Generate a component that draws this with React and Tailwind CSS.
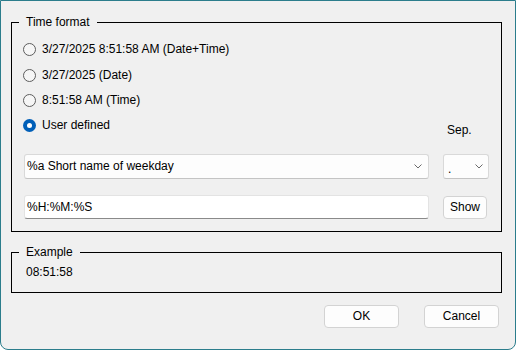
import React from "react";

function Radio({ checked, label }) {
  return (
    <div className="h-[25px] flex items-center pl-[11px]">
      {checked ? (
        <span className="w-[13px] h-[13px] rounded-full bg-[#005fb8] flex items-center justify-center">
          <span className="w-[5px] h-[5px] rounded-full bg-white" />
        </span>
      ) : (
        <span className="w-[13px] h-[13px] rounded-full border border-[#5d5d5d] bg-[#f6f6f6]" />
      )}
      <span className="ml-[6px]">{label}</span>
    </div>
  );
}

function Chevron() {
  return (
    <svg width="8" height="5" viewBox="0 0 8 5" className="block">
      <path d="M0.5 0.5 L4 4 L7.5 0.5" fill="none" stroke="#6a6a6a" strokeWidth="1" />
    </svg>
  );
}

export default function App() {
  return (
    <div className="w-[516px] h-[350px] bg-white">
      <div className="w-[516px] h-[350px] bg-[#f0f0f0] border border-[#2b7d8c] rounded-b-[8px] flex flex-col font-['Liberation_Sans',Arial,sans-serif] text-[12px] leading-[15px] text-black">
        <fieldset className="ml-[10px] mt-[14px] w-[491px] h-[217px] border border-black">
          <legend className="ml-[7px] px-[7px] leading-[15px]">Time format</legend>
          <div className="pt-[7px]">
            <Radio label="3/27/2025 8:51:58 AM (Date+Time)" />
            <div className="h-px" />
            <Radio label="3/27/2025 (Date)" />
            <Radio label="8:51:58 AM (Time)" />
            <div className="flex">
              <Radio checked label="User defined" />
              <div className="ml-auto mr-[12px] w-[46px] pl-[4px] pt-[10px]">Sep.</div>
            </div>
            <div className="flex pl-[12px] mt-[16px]">
              <div className="w-[405px] h-[25px] bg-[#fdfdfd] border border-[#d9d9d9] border-b-[#c4c4c4] rounded-[3px] flex items-center pl-[2px] pr-[6px]">
                <span className="flex-1">%a Short name of weekday</span>
                <Chevron />
              </div>
              <div className="ml-[14px] w-[46px] h-[25px] bg-[#fdfdfd] border border-[#d9d9d9] border-b-[#c4c4c4] rounded-[3px] flex items-center pl-[4px] pr-[5px]">
                <span className="flex-1 pt-[6px]">.</span>
                <Chevron />
              </div>
            </div>
            <div className="flex pl-[12px] mt-[16px] items-start">
              <div className="w-[405px] h-[24px] bg-white border border-[#e3e3e3] border-b-[#8a8a8a] rounded-[3px] flex items-center pl-[2px]">
                %H:%M:%S
              </div>
              <div className="ml-[14px] mt-[1px] w-[44px] h-[23px] bg-[#fdfdfd] border border-[#d3d3d3] rounded-[4px] flex items-center justify-center">
                Show
              </div>
            </div>
          </div>
        </fieldset>
        <fieldset className="ml-[10px] mt-[13px] w-[491px] h-[48px] border border-black">
          <legend className="ml-[7px] px-[7px] leading-[15px]">Example</legend>
          <div className="pl-[14px] pt-[5px]">08:51:58</div>
        </fieldset>
        <div className="flex justify-end gap-[25px] pr-[16px] mt-[12px]">
          <div className="w-[75px] h-[23px] bg-[#fdfdfd] border border-[#d3d3d3] rounded-[4px] flex items-center justify-center">OK</div>
          <div className="w-[75px] h-[23px] bg-[#fdfdfd] border border-[#d3d3d3] rounded-[4px] flex items-center justify-center">Cancel</div>
        </div>
      </div>
    </div>
  );
}
